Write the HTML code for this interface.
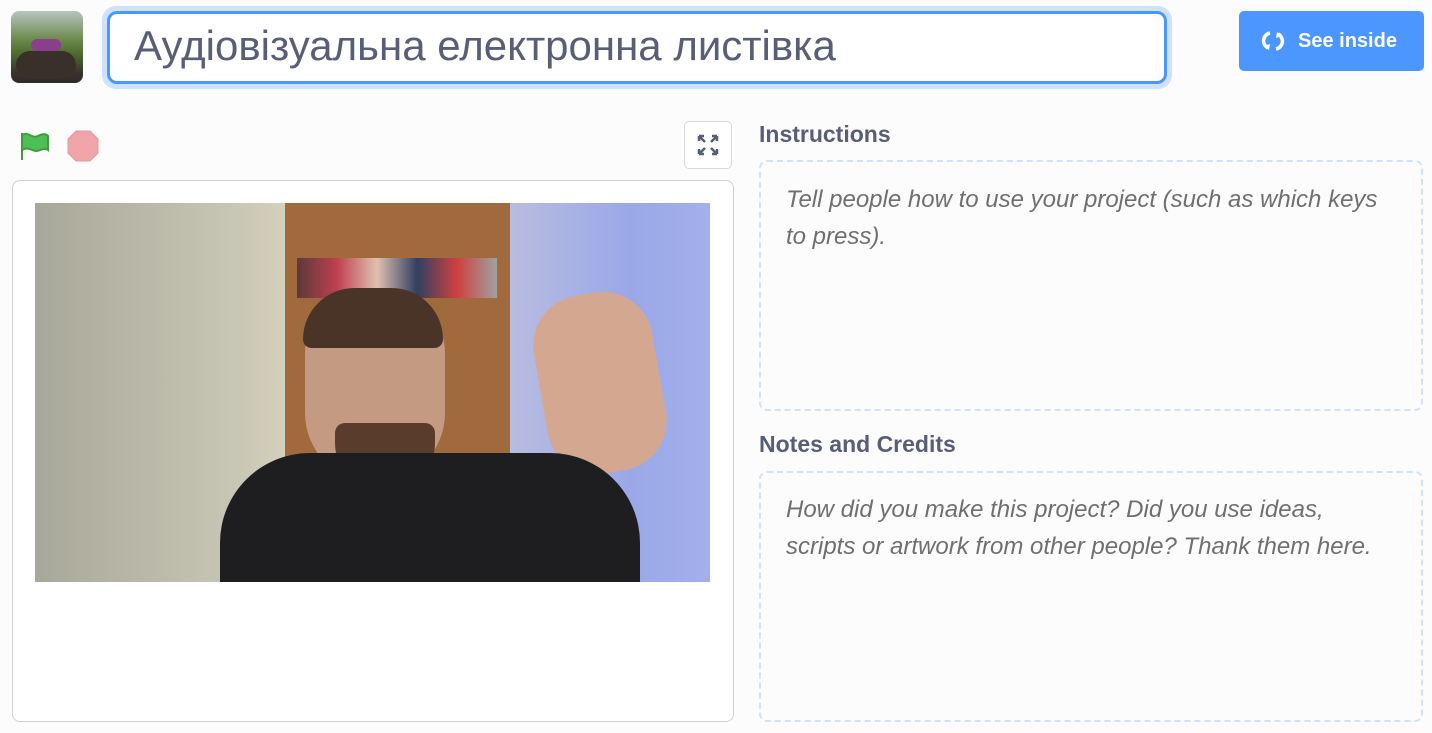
<!DOCTYPE html>
<html><head><meta charset="utf-8"><style>
body{margin:0;width:1432px;height:733px;background:#fcfcfc;font-family:"Liberation Sans",sans-serif;position:relative;overflow:hidden}
.a{position:absolute}
</style></head><body>
<div class="a" style="left:11px;top:11px;width:72px;height:72px;border-radius:8px;background:linear-gradient(180deg,#b9c4c0 0%,#6a8a4a 40%,#4d6a2f 60%,#3b3330 85%,#2f2a26 100%);overflow:hidden">
<div class="a" style="left:20px;top:28px;width:30px;height:12px;background:#8a3f8a;border-radius:6px"></div>
<div class="a" style="left:5px;top:40px;width:60px;height:28px;background:#3a302a;border-radius:30px"></div></div>
<div class="a" style="left:102px;top:6px;width:1070px;height:83px;border-radius:14px;background:#cfe2fd"></div>
<div class="a" style="left:107px;top:11px;width:1054px;height:67px;border:3px solid #4c97ff;border-radius:10px;background:#fff"></div>
<div class="a" style="left:134px;top:22px;font-size:42px;color:#575e75">Аудіовізуальна електронна листівка</div>
<div class="a" style="left:1239px;top:11px;width:185px;height:60px;background:#4c97ff;border-radius:5px;color:#fff;font-weight:bold;font-size:20px;line-height:60px">
<svg class="a" style="left:22px;top:18px" width="24" height="24" viewBox="0 0 24 24"><path d="M9 4A8 8 0 0 0 7 19 M15 20A8 8 0 0 0 17 5" fill="none" stroke="#fff" stroke-width="3.5"/><path d="M3 17l5 4 1-6z M21 7l-5-4-1 6z" fill="#fff"/></svg>
<span class="a" style="left:59px">See inside</span></div>
<svg class="a" style="left:18px;top:130px" width="34" height="32"><path d="M4 30V3 M4 5c6-4 10 4 16 1s8-2 10 0v14c-4-3-8 1-12 1s-8-5-14-1" fill="#4cbf56" stroke="#45993d" stroke-width="2"/></svg>
<svg class="a" style="left:67px;top:130px" width="32" height="32"><polygon points="9,1 23,1 31,9 31,23 23,31 9,31 1,23 1,9" fill="#f2a5a8" stroke="#e4999c"/></svg>
<div class="a" style="left:684px;top:121px;width:48px;height:48px;border:1px solid #d9d9d9;border-radius:5px;background:#fff;box-sizing:border-box"></div>
<svg class="a" style="left:697px;top:134px" width="22" height="22" viewBox="0 0 22 22" fill="none" stroke="#575e75" stroke-width="2.5"><path d="M2 2l6 6M2 2h5M2 2v5 M20 2l-6 6M20 2h-5M20 2v5 M2 20l6-6M2 20h5M2 20v-5 M20 20l-6-6M20 20h-5M20 20v-5"/></svg>
<div class="a" style="left:12px;top:180px;width:722px;height:542px;border:1px solid #d0d0d0;border-radius:8px;background:#fff;box-sizing:border-box"></div>
<div class="a" style="left:35px;top:203px;width:675px;height:379px;overflow:hidden;background:linear-gradient(90deg,#a8a89a 0%,#c8c6b4 30%,#d4d0bc 37%,#b8b4a4 37.5%)">
<div class="a" style="left:250px;top:0;width:225px;height:379px;background:#a06a3c"></div>
<div class="a" style="left:262px;top:55px;width:200px;height:40px;background:linear-gradient(90deg,#5a3a3a,#c04050,#e0c0b0,#304060,#d04040,#a0a0a0)"></div>
<div class="a" style="left:475px;top:0;width:200px;height:379px;background:linear-gradient(90deg,#b8bce0,#9aa8e8 60%,#a4b0ec)"></div>
<div class="a" style="left:270px;top:90px;width:140px;height:190px;background:#c49a82;border-radius:60px 60px 70px 70px"></div>
<div class="a" style="left:268px;top:85px;width:140px;height:60px;background:#4a3428;border-radius:60px 60px 10px 10px"></div>
<div class="a" style="left:300px;top:220px;width:100px;height:70px;background:#5a3c2c;border-radius:10px 10px 50px 50px"></div>
<div class="a" style="left:505px;top:90px;width:120px;height:180px;background:#d4a890;border-radius:50px;transform:rotate(-10deg)"></div>
<div class="a" style="left:185px;top:250px;width:420px;height:200px;background:#1e1e20;border-radius:90px 90px 0 0"></div>
</div>
<div class="a" style="left:759px;top:121px;font-size:23px;font-weight:bold;color:#575e75">Instructions</div>
<div class="a" style="left:759px;top:160px;width:664px;height:251px;border:2px dashed #cfe2fd;border-radius:8px;box-sizing:border-box"></div>
<div class="a" style="left:786px;top:181px;width:600px;font-size:24px;font-style:italic;color:#6f6f6f;line-height:37px">Tell people how to use your project (such as which keys to press).</div>
<div class="a" style="left:759px;top:431px;font-size:23px;font-weight:bold;color:#575e75">Notes and Credits</div>
<div class="a" style="left:759px;top:471px;width:664px;height:251px;border:2px dashed #cfe2fd;border-radius:8px;box-sizing:border-box"></div>
<div class="a" style="left:786px;top:491px;width:600px;font-size:24px;font-style:italic;color:#6f6f6f;line-height:37px">How did you make this project? Did you use ideas, scripts or artwork from other people? Thank them here.</div>
</body></html>
